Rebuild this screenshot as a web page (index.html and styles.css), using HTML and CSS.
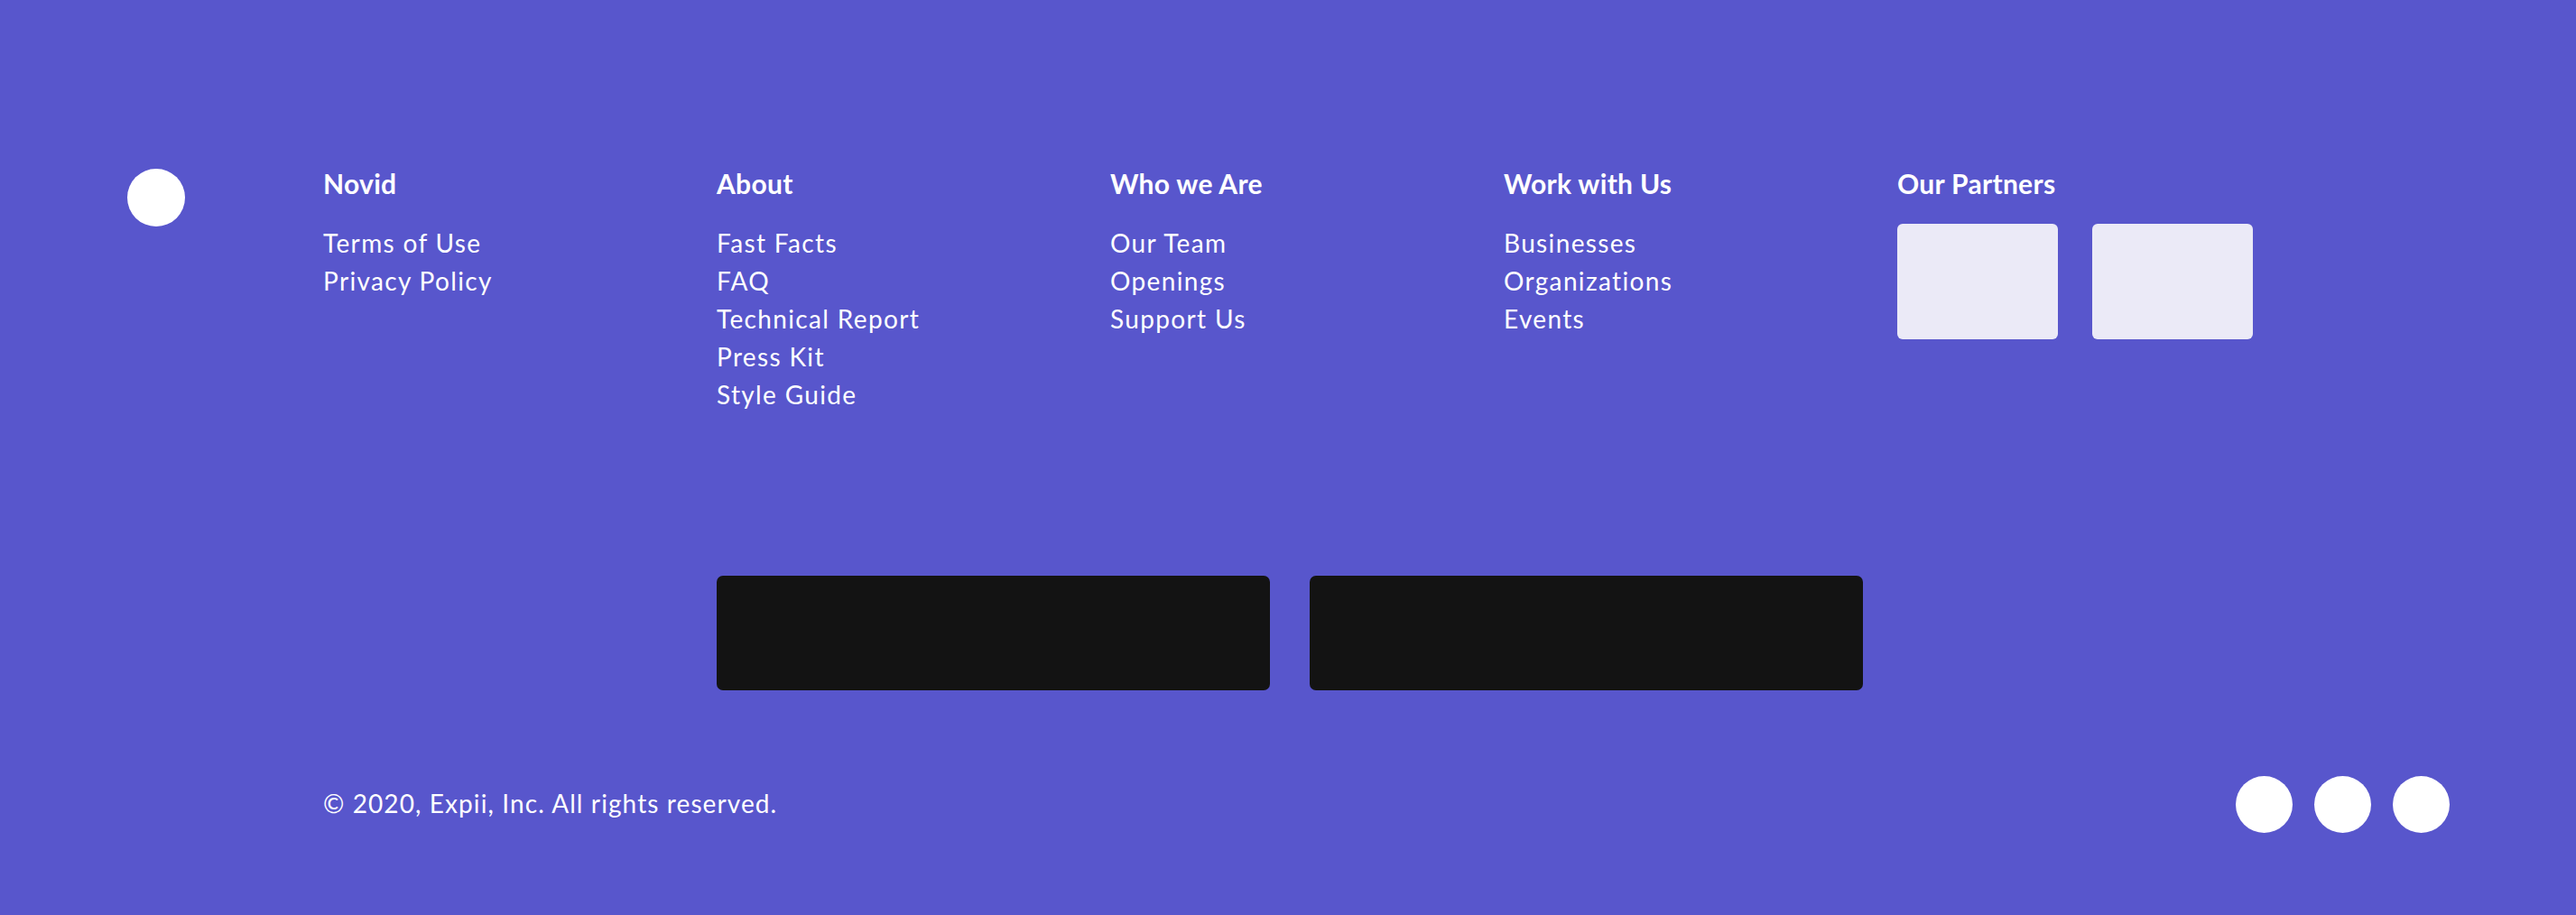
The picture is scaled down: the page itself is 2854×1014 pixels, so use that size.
FILE: index.html
```html
<!DOCTYPE html>
<html lang="en">
<head>
<meta charset="utf-8">
<title>Footer</title>
<link rel="stylesheet" href="styles.css">
</head>
<body>
<footer class="footer">
  <div class="top">
    <div class="logo"></div>
    <div class="columns">
      <div class="col">
        <h3 class="col-title">Novid</h3>
        <ul class="links">
          <li><a href="#">Terms of Use</a></li>
          <li><a href="#">Privacy Policy</a></li>
        </ul>
      </div>
      <div class="col">
        <h3 class="col-title">About</h3>
        <ul class="links">
          <li><a href="#">Fast Facts</a></li>
          <li><a href="#">FAQ</a></li>
          <li><a href="#">Technical Report</a></li>
          <li><a href="#">Press Kit</a></li>
          <li><a href="#">Style Guide</a></li>
        </ul>
      </div>
      <div class="col">
        <h3 class="col-title">Who we Are</h3>
        <ul class="links">
          <li><a href="#">Our Team</a></li>
          <li><a href="#">Openings</a></li>
          <li><a href="#">Support Us</a></li>
        </ul>
      </div>
      <div class="col">
        <h3 class="col-title">Work with Us</h3>
        <ul class="links">
          <li><a href="#">Businesses</a></li>
          <li><a href="#">Organizations</a></li>
          <li><a href="#">Events</a></li>
        </ul>
      </div>
      <div class="col">
        <h3 class="col-title">Our Partners</h3>
        <div class="partners">
          <div class="partner"></div>
          <div class="partner"></div>
        </div>
      </div>
    </div>
  </div>
  <div class="badges">
    <a class="badge" href="#"></a>
    <a class="badge" href="#"></a>
  </div>
  <div class="bottom">
    <p class="copyright">© 2020, Expii, Inc. All rights reserved.</p>
    <div class="socials">
      <a class="social" href="#"></a>
      <a class="social" href="#"></a>
      <a class="social" href="#"></a>
    </div>
  </div>
</footer>
</body>
</html>
```
FILE: styles.css
```css
* { box-sizing: border-box; }
html, body { margin: 0; padding: 0; }
body {
  background: #5856cc;
  font-family: "Lato", "Liberation Sans", sans-serif;
  color: #ffffff;
}
.footer {
  height: 1014px;
  padding: 185px 140px 0 141px;
  background: #5856cc;
}
.top {
  display: flex;
  align-items: flex-start;
}
.logo {
  width: 64px;
  height: 64px;
  margin-top: 2px;
  border-radius: 50%;
  background: #ffffff;
  flex: none;
}
.columns {
  margin-left: 153px;
  display: grid;
  grid-template-columns: repeat(4, 436px) auto;
}
.col-title {
  margin: 0 0 27px;
  font-size: 30px;
  line-height: 36px;
  font-weight: 700;
  letter-spacing: 0.3px;
}
.links {
  list-style: none;
  margin: 0;
  padding: 0;
}
.links li {
  font-size: 28px;
  line-height: 42px;
  letter-spacing: 1.35px;
}
.links a {
  color: #ffffff;
  text-decoration: none;
}
.partners {
  display: flex;
  gap: 38px;
}
.partner {
  width: 178px;
  height: 128px;
  border-radius: 6px;
  background: #ebeaf7;
}
.badges {
  display: flex;
  gap: 44px;
  margin: 180px 0 0 653px;
}
.badge {
  width: 613px;
  height: 127px;
  border-radius: 7px;
  background: #131313;
}
.bottom {
  display: flex;
  align-items: center;
  justify-content: space-between;
  margin-top: 95px;
}
.copyright {
  margin: 0 0 0 217px;
  font-size: 28px;
  line-height: 34px;
  letter-spacing: 1.1px;
  position: relative;
  top: -2px;
}
.socials {
  display: flex;
  gap: 24px;
}
.social {
  width: 63px;
  height: 63px;
  border-radius: 50%;
  background: #ffffff;
}
```
